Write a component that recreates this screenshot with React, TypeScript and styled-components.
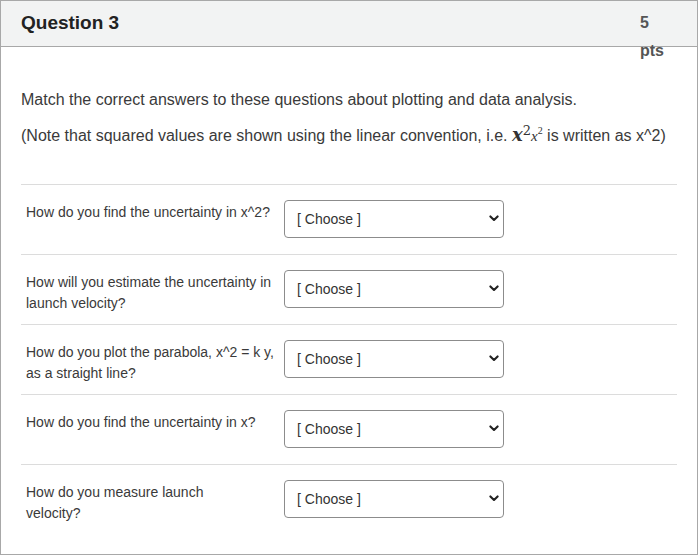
import React from 'react';
import styled, { createGlobalStyle } from 'styled-components';

// each question is split into the lines it is shown on
const QUESTIONS: string[][] = [
  ['How do you find the uncertainty in x^2?'],
  ['How will you estimate the uncertainty in launch velocity?'],
  ['How do you plot the parabola, x^2 = k y, as a straight line?'],
  ['How do you find the uncertainty in x?'],
  ['How do you measure launch', 'velocity?'],
];

const GlobalStyle = createGlobalStyle`
  html, body {
    margin: 0;
    padding: 0;
    background: #fff;
  }
  body {
    font-family: "Liberation Sans", Arial, sans-serif;
  }
`;

function Chevron() {
  return (
    <svg width="10" height="7" viewBox="0 0 10 7">
      <path d="M1.4 1.4 L5 5 L8.6 1.4" fill="none" stroke="#222" strokeWidth="2.1" strokeLinecap="round" strokeLinejoin="round" />
    </svg>
  );
}

function AnswerSelect() {
  return (
    <SelectWrap>
      <Select defaultValue="">
        <option value="">[ Choose ]</option>
      </Select>
      <Arrow>
        <Chevron />
      </Arrow>
    </SelectWrap>
  );
}

export default function App() {
  return (
    <>
      <GlobalStyle />
      <Card>
        <Header>
          <Title>Question 3</Title>
          <Points>5 pts</Points>
        </Header>
        <Body>
          <Text>Match the correct answers to these questions about plotting and data analysis.</Text>
          <Text>
            (Note that squared values are shown using the linear convention, i.e.{' '}
            <MathBig>
              x<sup>2</sup>
            </MathBig>
            <MathSmall>
              x<sup>2</sup>
            </MathSmall>{' '}
            is written as x^2)
          </Text>
          <Answers>
            {QUESTIONS.map((lines) => (
              <Row key={lines.join(' ')}>
                <Label>
                  {lines.map((line, i) => (
                    <React.Fragment key={i}>
                      {i > 0 && <br />}
                      {line}
                    </React.Fragment>
                  ))}
                </Label>
                <AnswerSelect />
              </Row>
            ))}
          </Answers>
        </Body>
      </Card>
    </>
  );
}

const Card = styled.div`
  width: 698px;
  height: 555px;
  box-sizing: border-box;
  border: 1px solid #a8a8a8;
  background: #fff;
`;

const Header = styled.div`
  height: 46px;
  box-sizing: border-box;
  display: flex;
  justify-content: space-between;
  align-items: flex-start;
  padding: 8px 20px 0;
  background: #f2f3f3;
  border-bottom: 1px solid #a8a8a8;
`;

const Title = styled.div`
  font-size: 19px;
  line-height: 28px;
  font-weight: bold;
  color: #222;
`;

const Points = styled.div`
  width: 26px;
  margin-right: 11px;
  font-size: 16px;
  line-height: 28px;
  font-weight: bold;
  color: #555;
`;

const Body = styled.div`
  padding: 41px 20px 0;
`;

const Text = styled.p`
  margin: 0 0 11px;
  font-size: 16px;
  line-height: 24px;
  color: #3a3a3a;
  white-space: nowrap;
`;

const MathBig = styled.span`
  font-family: "DejaVu Serif", serif;
  font-style: italic;
  font-weight: bold;
  font-size: 18px;
  color: #333;

  sup {
    font-size: 13px;
    font-weight: normal;
    font-style: normal;
    vertical-align: 6px;
    line-height: 0;
  }
`;

const MathSmall = styled.span`
  font-family: "Liberation Serif", serif;
  font-style: italic;
  font-size: 15px;
  color: #333;

  sup {
    font-size: 10px;
    font-style: normal;
    vertical-align: 7px;
    line-height: 0;
  }
`;

const Answers = styled.div`
  margin-top: 36px;
`;

const Row = styled.div`
  display: flex;
  align-items: flex-start;
  gap: 8px;
  height: 70px;
  box-sizing: border-box;
  padding-top: 15px;
  border-top: 1px solid #dcdcdc;
`;

const Label = styled.div`
  width: 250px;
  padding: 2px 0 0 5px;
  font-size: 14px;
  line-height: 21px;
  color: #3a3a3a;
`;

const SelectWrap = styled.div`
  position: relative;
  width: 220px;
  height: 38px;
`;

const Select = styled.select`
  appearance: none;
  width: 100%;
  height: 100%;
  box-sizing: border-box;
  padding: 0 28px 0 12px;
  border: 1px solid #8c8c8c;
  border-radius: 4px;
  background: #fff;
  font-family: "Liberation Sans", Arial, sans-serif;
  font-size: 14px;
  color: #333;
`;

const Arrow = styled.span`
  position: absolute;
  right: 5px;
  top: 15px;
  display: flex;
  pointer-events: none;
`;
